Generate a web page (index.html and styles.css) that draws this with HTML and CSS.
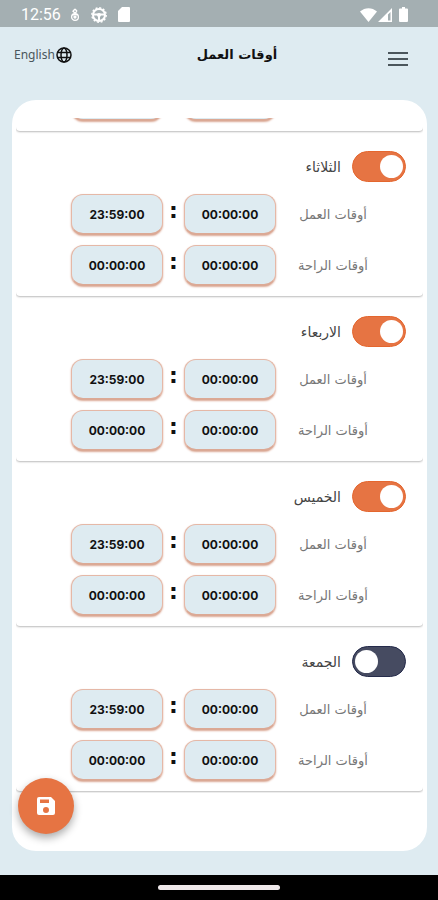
FILE: index.html
```html
<!DOCTYPE html>
<html lang="ar" dir="rtl">
<head>
<meta charset="utf-8">
<meta name="viewport" content="width=device-width, initial-scale=1">
<title>أوقات العمل</title>
<link rel="stylesheet" href="styles.css">
</head>
<body>
<div class="status" dir="ltr">
  <span class="clock">12:56</span>
  <svg class="status-flame" width="10" height="14" viewBox="0 0 10 14" fill="none" stroke="#fff" stroke-width="1.3"><path d="M5 1 3 3.200 7.500 7.500M7 3.200 2.500 7.500M5 1l2 2.200"/><circle cx="5" cy="9" r="3.400"/><circle cx="5" cy="9" r="1" fill="#fff"/></svg>
  <svg class="status-gear" width="16" height="16" viewBox="0 0 16 16" fill="none" stroke="#fff"><circle cx="8" cy="8" r="6" stroke-width="2"/><circle cx="8" cy="8" r="7.200" stroke-width="1.400" stroke-dasharray="2 1.770"/><path d="M3 7.500h10M8 8v5" stroke-width="2"/><circle cx="8" cy="8" r="2" fill="#fff" stroke="none"/></svg>
  <svg class="status-card" width="12" height="15" viewBox="0 0 12 15"><path fill="#fff" d="M4 0h7a1 1 0 0 1 1 1v13a1 1 0 0 1-1 1H1a1 1 0 0 1-1-1V4z"/></svg>
  <svg class="status-wifi" width="17" height="14" viewBox="0 0 17 14"><path fill="#fff" d="M8.500 14 0 3.500C5-1 12-1 17 3.500z"/></svg>
  <svg class="status-signal" width="14" height="14" viewBox="0 0 14 14"><path fill="#fff" d="M14 0v14H0zM12.500 4 10 6.500v6h2.500z" fill-rule="evenodd"/></svg>
  <svg class="status-battery" width="9" height="15" viewBox="0 0 9 15"><path fill="#fff" d="M3 0h3v1.500h2a1 1 0 0 1 1 1V14a1 1 0 0 1-1 1H1a1 1 0 0 1-1-1V2.500a1 1 0 0 1 1-1h2z"/></svg>
</div>

<header class="topbar">
  <button class="menu" type="button" aria-label="القائمة">
    <svg width="20" height="14" viewBox="0 0 20 14" stroke="#4b565c" stroke-width="2"><path d="M0 1h20M0 7h20M0 13h20"/></svg>
  </button>
  <h1>أوقات العمل</h1>
  <a class="language" href="#en" dir="ltr">English<svg width="16" height="16" viewBox="0 0 16 16" fill="none" stroke="#111" stroke-width="1.500"><circle cx="8" cy="8" r="7"/><ellipse cx="8" cy="8" rx="3" ry="7"/><path d="M1.500 5.500h13M1.500 10.500h13"/></svg></a>
</header>

<main>
  <form class="schedule" id="schedule"></form>
  <button class="save" type="submit" form="schedule" aria-label="حفظ">
    <svg width="18" height="18" viewBox="0 0 18 18"><path fill="#fff" fill-rule="evenodd" d="M2 0h12l4 4v12a2 2 0 0 1-2 2H2a2 2 0 0 1-2-2V2a2 2 0 0 1 2-2zM3 2.500V6h9V2.500zM9 10a3 3 0 1 0 0 6 3 3 0 0 0 0-6z"/></svg>
  </button>
</main>

<div class="navbar"><span class="handle"></span></div>
<script src="schedule.js"></script>
</body>
</html>
```
FILE: styles.css
```css
* { box-sizing: border-box; }

body {
  margin: 0;
  height: 100vh;
  display: flex;
  flex-direction: column;
  background: #deebf1;
  color: #111;
  font-family: "DejaVu Sans", sans-serif;
}

button, input { font: inherit; margin: 0; }

.status {
  display: flex;
  flex: none;
  align-items: center;
  height: 27px;
  padding: 2px 30px 0 21px;
  background: #a4afb2;
  color: #fff;
}
.clock { font: 16px/20px Roboto, sans-serif; }
.status-flame { margin-left: 9px; }
.status-gear { margin-left: 11px; }
.status-card { margin-left: 11px; }
.status-wifi { margin-left: auto; }
.status-signal { margin-left: 1px; }
.status-battery { margin-left: 7px; }

.topbar {
  display: flex;
  flex: none;
  align-items: center;
  height: 56px;
  padding: 0 30px 0 14px;
}
.menu {
  display: flex;
  padding: 8px 0 0;
  border: 0;
  background: none;
}
h1 {
  flex: 1;
  margin: 0;
  padding-left: 14px;
  font-size: 13px;
  line-height: 20px;
  font-weight: 700;
  text-align: center;
}
.language {
  display: flex;
  align-items: center;
  gap: 1px;
  color: #4b565c;
  font: 12px/20px "Noto Sans", sans-serif;
  text-decoration: none;
}

main {
  position: relative;
  display: flex;
  flex: 1;
  min-height: 0;
  margin: 17px 11px 24px 12px;
  padding: 18px 4px 58px;
  border-radius: 24px;
  background: #fff;
}

.schedule {
  display: flex;
  flex: 1;
  flex-direction: column;
  justify-content: flex-end;
  gap: 4px;
  overflow: hidden;
  padding-bottom: 2px;
}
.day {
  flex: none;
  padding: 16px 17px 10px;
  border-radius: 4px;
  background: #fff;
  box-shadow: 0 1px 2px #bbb;
  clip-path: inset(12px -2px -3px);
}
.day-head {
  display: flex;
  align-items: center;
  gap: 11px;
  margin-bottom: 12px;
  color: #444;
  font-size: 14px;
}
.toggle {
  appearance: none;
  display: flex;
  align-items: center;
  width: 54px;
  height: 31px;
  padding: 0 2px;
  border: 1px solid #252b4b;
  border-radius: 16px;
  background: #464b61;
}
.toggle::before {
  content: "";
  width: 23px;
  height: 23px;
  margin-right: auto;
  border-radius: 50%;
  background: #fff;
}
.toggle:checked {
  border-color: #e4662e;
  background: #e67443;
}
.toggle:checked::before { margin-right: 0; }

.hours {
  display: flex;
  align-items: center;
  justify-content: center;
}
.hours + .hours { margin-top: 10px; }
.hours-label {
  width: 70px;
  margin-left: 22px;
  color: #777;
  font-size: 13px;
  line-height: 20px;
  text-align: center;
  white-space: nowrap;
}
.time {
  width: 92px;
  height: 41px;
  padding: 0;
  border: 1px solid #e5b8a7;
  border-bottom: 2px solid #dba995;
  border-radius: 12px;
  background: #deebf1;
  box-shadow: 0 1px 2px #dba995;
  color: #111;
  font: 700 12px/20px Inter, sans-serif;
  text-align: center;
}
.colon {
  width: 21px;
  padding-bottom: 8px;
  font-size: 22px;
  line-height: 20px;
  font-weight: 700;
  text-align: center;
}

.save {
  position: absolute;
  left: 6px;
  bottom: 17px;
  display: flex;
  align-items: center;
  justify-content: center;
  width: 56px;
  height: 56px;
  padding: 0;
  border: 0;
  border-radius: 50%;
  background: #e67443;
  box-shadow: 0 4px 8px #0005;
}

.navbar {
  display: flex;
  flex: none;
  align-items: center;
  justify-content: center;
  height: 25px;
  background: #000;
}
.handle {
  width: 122px;
  height: 5px;
  border-radius: 3px;
  background: #eee8ea;
}
```
FILE: schedule.js
```js
const days = [
  { name: "الاثنين", open: true },
  { name: "الثلاثاء", open: true },
  { name: "الاربعاء", open: true },
  { name: "الخميس", open: true },
  { name: "الجمعة", open: false },
];

function hours(label, from, to) {
  return `<div class="hours" role="group" aria-label="${label}">
    <span class="hours-label">${label}</span>
    <input class="time" type="text" dir="ltr" value="${from}" aria-label="${label} من">
    <span class="colon">:</span>
    <input class="time" type="text" dir="ltr" value="${to}" aria-label="${label} إلى">
  </div>`;
}

document.getElementById("schedule").innerHTML = days.map((day, i) => `
  <section class="day">
    <div class="day-head">
      <input class="toggle" type="checkbox" id="day-${i}" ${day.open ? "checked" : ""}>
      <label for="day-${i}">${day.name}</label>
    </div>
    ${hours("أوقات العمل", "00:00:00", "23:59:00")}
    ${hours("أوقات الراحة", "00:00:00", "00:00:00")}
  </section>`).join("");
```
